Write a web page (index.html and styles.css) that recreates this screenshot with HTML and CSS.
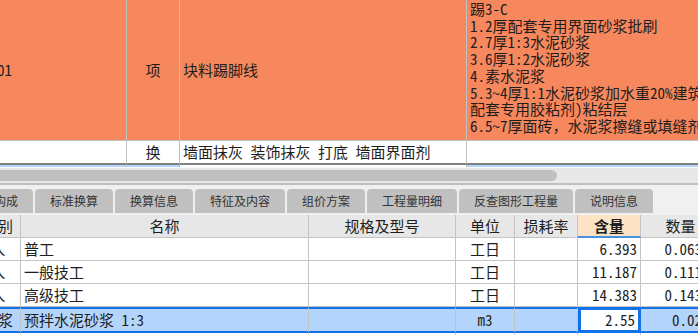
FILE: index.html
```html
<html>

<head>
    <title>清单编辑</title>
    <link rel="stylesheet" href="styles.css">
</head>

<body>
    <div class="top-pane">
        <table class="bill">
            <tr class="bill-main">
                <td class="code">01</td>
                <td class="c">项</td>
                <td>块料踢脚线</td>
                <td class="desc">
                    <div>踢3-C</div>
                    <div>1.2厚配套专用界面砂浆批刷</div>
                    <div>2.7厚1:3水泥砂浆</div>
                    <div>3.6厚1:2水泥砂浆</div>
                    <div>4.素水泥浆</div>
                    <div>5.3~4厚1:1水泥砂浆加水重20%建筑胶(或</div>
                    <div>配套专用胶粘剂)粘结层</div>
                    <div>6.5~7厚面砖<span class="fw">，</span>水泥浆擦缝或填缝剂勾缝</div>
                </td>
            </tr>
            <tr class="bill-sub">
                <td></td>
                <td class="c">换</td>
                <td>墙面抹灰 装饰抹灰 打底 墙面界面剂</td>
                <td></td>
            </tr>
            <tr class="bill-next">
                <td></td>
                <td></td>
                <td class="editing">墙面抹灰 装饰抹灰 打底</td>
                <td></td>
            </tr>
        </table>
    </div>

    <div class="hscroll">
        <div class="thumb"></div>
    </div>
    <div class="splitter"></div>

    <div class="panel">
        <div class="tabs">
            <div class="tab">单价构成</div>
            <div class="tab">标准换算</div>
            <div class="tab">换算信息</div>
            <div class="tab">特征及内容</div>
            <div class="tab">组价方案</div>
            <div class="tab">工程量明细</div>
            <div class="tab">反查图形工程量</div>
            <div class="tab">说明信息</div>
        </div>

        <table class="detail">
            <tr>
                <th class="kind">类别</th>
                <th>名称</th>
                <th>规格及型号</th>
                <th>单位</th>
                <th>损耗率</th>
                <th class="qty-head">含量</th>
                <th>数量</th>
            </tr>
            <tr>
                <td class="kind">人</td>
                <td>普工</td>
                <td></td>
                <td class="c">工日</td>
                <td></td>
                <td class="num">6.393</td>
                <td class="num">0.06393</td>
            </tr>
            <tr>
                <td class="kind">人</td>
                <td>一般技工</td>
                <td></td>
                <td class="c">工日</td>
                <td></td>
                <td class="num">11.187</td>
                <td class="num">0.11187</td>
            </tr>
            <tr>
                <td class="kind">人</td>
                <td>高级技工</td>
                <td></td>
                <td class="c">工日</td>
                <td></td>
                <td class="num">14.383</td>
                <td class="num">0.14383</td>
            </tr>
            <tr class="selected">
                <td class="kind">商浆</td>
                <td>预拌水泥砂浆 1:3</td>
                <td></td>
                <td class="c">m3</td>
                <td></td>
                <td class="num edit">2.55</td>
                <td class="num">0.0255</td>
            </tr>
            <tr>
                <td class="kind">材</td>
                <td>水</td>
                <td></td>
                <td class="c">m3</td>
                <td></td>
                <td class="num">3</td>
                <td class="num">0.03</td>
            </tr>
        </table>
    </div>
</body>

</html>
```

FILE: styles.css
```css
:root {
    --orange: #f7875d;
    --grid: #c4c4c4;
    --tab: #c0c0c0;
    --select: #b4d5fb;
    --blue: #1272ea;
}

html,
body {
    margin: 0;
    overflow: hidden;
    background-color: #f0f0f0;
    font-family: "Noto Sans CJK SC", sans-serif;
    color: #1e1e1e;
}

table {
    border-spacing: 0;
    table-layout: fixed;
    font-size: 15px;
    font-feature-settings: "hwid";
}

.fw {
    font-feature-settings: normal;
}

td,
th {
    box-sizing: border-box;
    padding: 0 3px;
    white-space: nowrap;
    overflow: hidden;
    line-height: 20px;
    font-weight: normal;
    text-align: left;
}

.c {
    text-align: center;
}

.num {
    text-align: right;
}

/* top pane: bill list */
.top-pane {
    height: 167px;
    overflow: hidden;
    background-color: #fff;
}

.bill {
    width: 867px;
}

.bill td {
    border-right: 1px solid #c0c0c0;
    border-bottom: 1px solid #c0c0c0;
}

.bill td:nth-child(1) {
    width: 127px;
}

.bill td:nth-child(2) {
    width: 53px;
}

.bill td:nth-child(3) {
    width: 287px;
}

.bill td:nth-child(4) {
    width: 400px;
}

.bill-main td {
    height: 141px;
    background-color: var(--orange);
}

.code {
    text-indent: -6px;
}

.desc {
    vertical-align: top;
    line-height: 16.7px;
    padding-top: 1px;
}

.bill-sub td {
    height: 24px;
    background-color: #fff;
    border-bottom: 2px solid #808080;
}

.bill-next td {
    height: 22px;
    vertical-align: top;
    background-color: var(--select);
}

.bill-next .editing {
    background-color: #fff;
}

/* horizontal scroll bar of the top pane */
.hscroll {
    box-sizing: border-box;
    height: 16px;
    padding-top: 2px;
    border-top: 1px solid #f8f8f8;
    background-color: #e8e8e8;
}

.thumb {
    width: 557px;
    height: 11px;
    background-color: #c0c0c0;
    border-radius: 0 6px 6px 0;
}

.splitter {
    height: 2px;
    background-color: #c0c0c0;
}

/* bottom pane */
.panel {
    padding-top: 4px;
}

.tabs {
    display: flex;
    gap: 2px;
    height: 24px;
    margin-left: -45px;
    margin-bottom: 2px;
}

.tab {
    padding: 0 15px;
    background-color: var(--tab);
    border-radius: 4px 4px 0 0;
    font-size: 12px;
    line-height: 24px;
    color: #333;
    white-space: nowrap;
}

.detail {
    width: 741px;
    margin-left: -20px;
    background-color: #fff;
}

.detail td,
.detail th {
    height: 23px;
    border-right: 1px solid var(--grid);
    border-bottom: 1px solid var(--grid);
}

.detail th {
    background-color: #e7e7e7;
    text-align: center;
}

.detail th:nth-child(1) {
    width: 41px;
}

.detail th:nth-child(2) {
    width: 288px;
}

.detail th:nth-child(3) {
    width: 147px;
}

.detail th:nth-child(4) {
    width: 59px;
}

.detail th:nth-child(5) {
    width: 63px;
}

.detail th:nth-child(6) {
    width: 63px;
}

.detail th:nth-child(7) {
    width: 80px;
}

.detail .kind {
    padding: 0 4px 0 0;
    text-align: center;
}

.detail .qty-head {
    background-color: #fde4c6;
    border-bottom: 2px solid #4a90e2;
    font-weight: bold;
}

.selected td {
    height: 24px;
    background-color: var(--select);
    border-top: 2px solid var(--blue);
    border-bottom: 2px solid var(--blue);
}

.selected .edit {
    background-color: #fff;
    border: 3px solid var(--blue);
}
```
